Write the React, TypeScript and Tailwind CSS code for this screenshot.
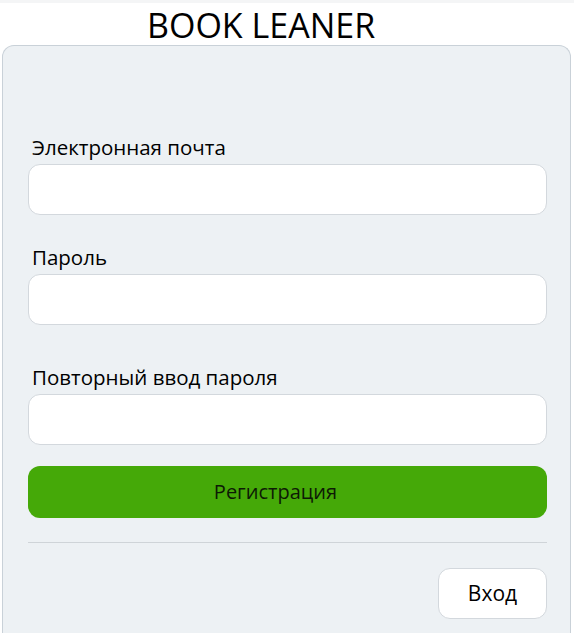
import React, { useState } from 'react';

const font = { fontFamily: '"Open Sans", Lato, sans-serif' };

interface FieldProps {
  id: string;
  label: string;
  type: string;
  value: string;
  onChange: (v: string) => void;
  className?: string;
}

const Field: React.FC<FieldProps> = ({ id, label, type, value, onChange, className }) => (
  <div className={className}>
    <label htmlFor={id} className="block pl-1 text-[20.5px] leading-[24px] text-black">
      {label}
    </label>
    <input
      id={id}
      type={type}
      value={value}
      onChange={(e) => onChange(e.target.value)}
      className="mt-[5px] block h-[51px] w-full rounded-[12px] border border-[#d3d8dd] bg-white px-3 text-[18px] outline-none"
    />
  </div>
);

export default function App() {
  const [email, setEmail] = useState('');
  const [password, setPassword] = useState('');
  const [repeat, setRepeat] = useState('');

  return (
    <div className="h-[633px] w-[574px] overflow-hidden bg-white" style={font}>
      <div className="h-[3px] bg-[#f4f5f6]" />
      <h1 className="pl-[147px] pt-[3px] text-[34px] leading-[39px] text-black">BOOK LEANER</h1>
      <form
        onSubmit={(e) => e.preventDefault()}
        className="ml-[2px] mr-[3px] h-[600px] rounded-t-[12px] border border-b-0 border-[#c9d1d8] bg-[#edf1f4] pl-[25px] pr-[23px] pt-[89px]"
      >
        <Field id="email" label="Электронная почта" type="email" value={email} onChange={setEmail} />
        <Field id="password" label="Пароль" type="password" value={password} onChange={setPassword} className="mt-[30px]" />
        <Field id="repeat" label="Повторный ввод пароля" type="password" value={repeat} onChange={setRepeat} className="mt-[40px]" />
        <button
          type="submit"
          className="mt-[21px] block h-[52px] w-full rounded-[12px] bg-[#45a908] pr-[24px] text-[20px] text-[#0d1a05]"
        >
          Регистрация
        </button>
        <div className="mt-[24px] h-px bg-[#cfd4d8]" />
        <div className="mt-[25px] flex justify-end">
          <button
            type="button"
            className="h-[51px] w-[109px] rounded-[12px] border border-[#d3d8dd] bg-white text-[21px] text-black"
          >
            Вход
          </button>
        </div>
      </form>
    </div>
  );
}
